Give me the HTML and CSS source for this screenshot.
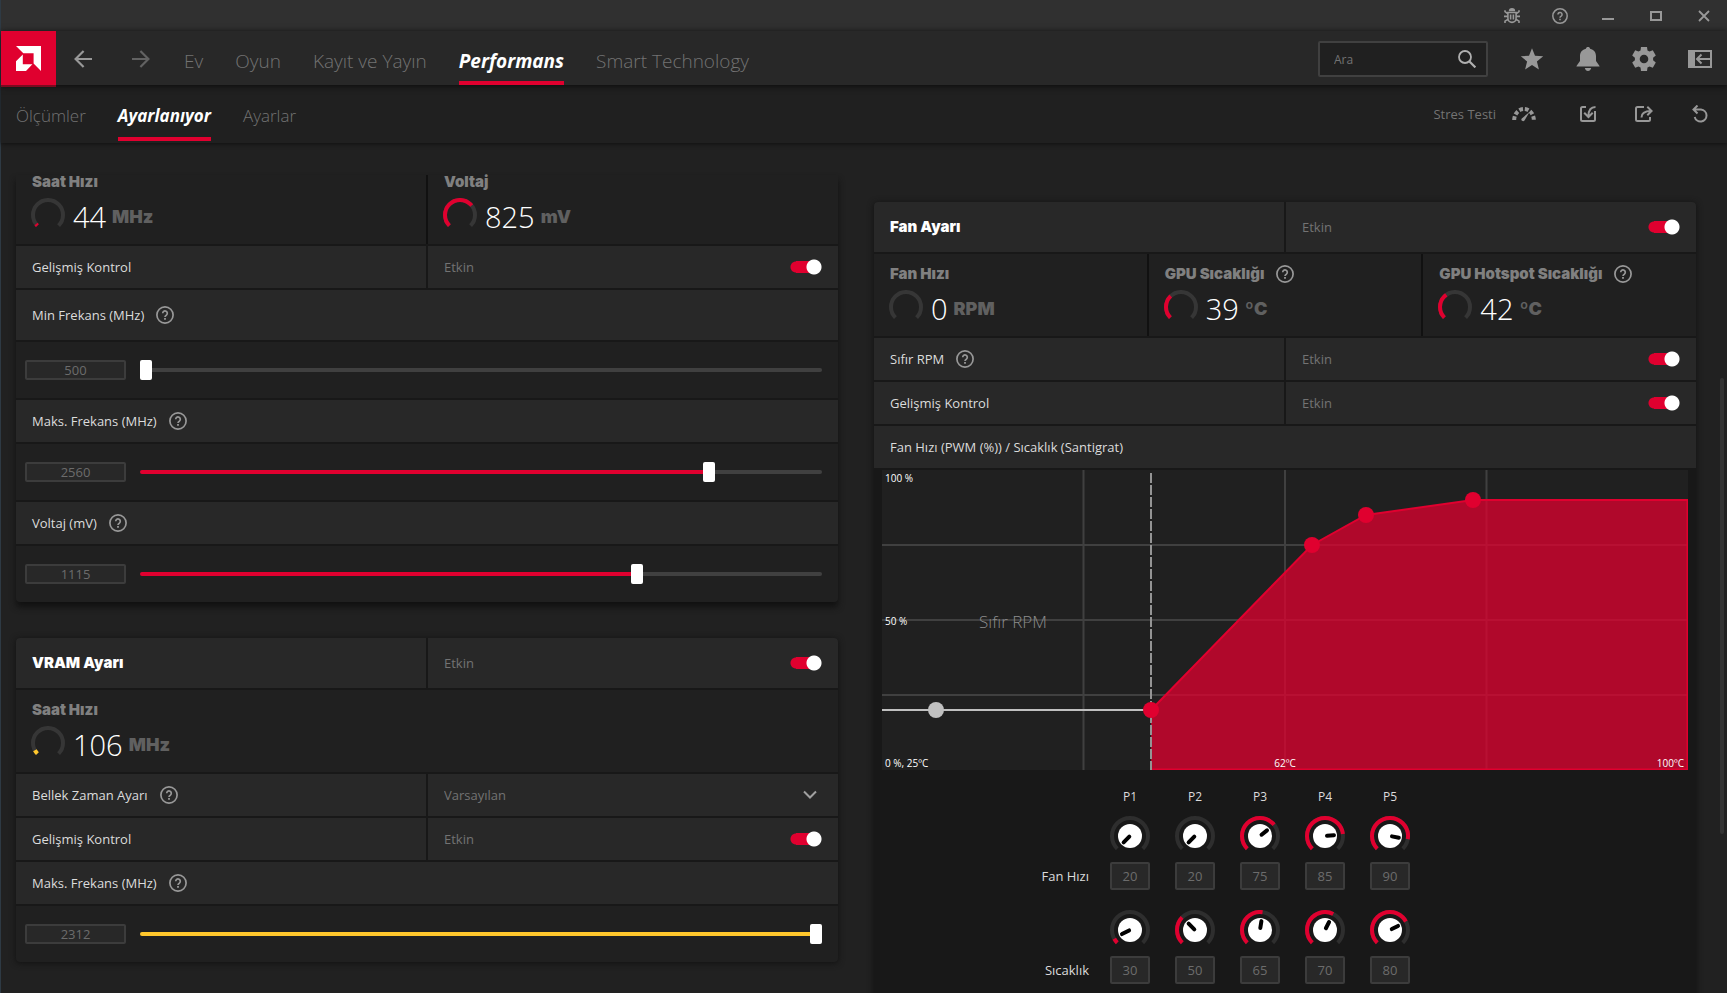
FILE: index.html
```html
<!DOCTYPE html>
<html lang="tr">
<head>
<meta charset="utf-8">
<meta name="viewport" content="width=device-width, initial-scale=1">
<title>Performans - Ayarlanıyor</title>
<link rel="stylesheet" href="styles.css">
</head>
<body>
<svg class="sprite" aria-hidden="true">
  <symbol id="help" viewBox="0 0 18 18">
    <circle cx="9" cy="9" r="8.1" fill="none" stroke="currentColor" stroke-width="1.7"/>
    <path d="M6.7 7.3a2.3 2.3 0 1 1 3.6 1.9Q9 10 9 11" fill="none" stroke="currentColor" stroke-width="1.7"/>
    <path d="M8.1 12h1.8v1.8H8.1z" fill="currentColor"/>
  </symbol>
  <symbol id="arc" viewBox="0 0 34 34">
    <path d="M6.4 27.6A15 15 0 1 1 27.6 27.6" fill="none" stroke="currentColor" stroke-width="4" pathLength="100"/>
  </symbol>
  <symbol id="dial" viewBox="0 0 40 40">
    <path d="M7.27 32.73A18 18 0 1 1 32.73 32.73" fill="none" stroke="#2e2e2e" stroke-width="4"/>
    <circle cx="20" cy="20" r="12" fill="#fff"/>
  </symbol>
</svg>

<div class="window">
  <div class="titlebar">
    <button class="icon-btn" aria-label="Hata bildir"><svg width="18" height="18" viewBox="0 0 18 18" fill="none" stroke="currentColor" stroke-width="1.6"><path d="M5.8 4.2a3.2 3.2 0 0 1 6.4 0z" fill="currentColor" stroke="none"/><path d="M4.9 5.5h8.2v5.8a4.1 4.1 0 0 1-8.2 0zM7.6 7.5v5M10.4 7.5v5M2 3.2v1.4l2.6 2M16 3.2v1.4l-2.6 2M1 9.4h4M13 9.4h4M2 16v-1.8l2.8-1.8M16 16v-1.8l-2.8-1.8"/></svg></button>
    <button class="icon-btn" aria-label="Yardım"><svg width="16" height="16"><use href="#help"/></svg></button>
    <button class="icon-btn" aria-label="Küçült"><svg width="12" height="12" viewBox="0 0 12 12"><path d="M0 8h12v2H0z" fill="currentColor"/></svg></button>
    <button class="icon-btn" aria-label="Ekranı kapla"><svg width="12" height="12" viewBox="0 0 12 12"><path d="M1 2h10v8H1z" fill="none" stroke="currentColor" stroke-width="2"/></svg></button>
    <button class="icon-btn" aria-label="Kapat"><svg width="12" height="12" viewBox="0 0 12 12"><path d="M1 1l10 10M11 1L1 11" stroke="currentColor" stroke-width="1.8"/></svg></button>
  </div>

  <header class="navbar">
    <a class="logo" href="#" aria-label="AMD"><svg width="25" height="25" viewBox="0 0 25 25" fill="#fff"><path d="M0 0h25v25l-7.4-7.6V7.3H7.3z"/><path d="M6.8 8.6v9.6h9.6L10 25H0V15.2z"/></svg></a>
    <div class="history">
      <button class="icon-btn back" aria-label="Geri"><svg width="18" height="18" viewBox="0 0 18 18" fill="none" stroke="currentColor" stroke-width="2.2"><path d="M18 9H2M9.6 1L1.6 9l8 8"/></svg></button>
      <button class="icon-btn forward" aria-label="İleri"><svg width="18" height="18" viewBox="0 0 18 18" fill="none" stroke="currentColor" stroke-width="2.2"><path d="M0 9h16M8.4 1l8 8-8 8"/></svg></button>
    </div>
    <nav class="tabs">
      <a class="tab" href="#">Ev</a>
      <a class="tab" href="#">Oyun</a>
      <a class="tab" href="#">Kayıt ve Yayın</a>
      <a class="tab active" href="#">Performans</a>
      <a class="tab" href="#">Smart Technology</a>
    </nav>
    <div class="actions">
      <label class="search">
        <input type="search" placeholder="Ara" aria-label="Ara">
        <svg width="18" height="18" viewBox="0 0 18 18" fill="none" stroke="currentColor" stroke-width="1.8"><circle cx="7" cy="7" r="6"/><path d="M11.2 11.2l6.2 6.2" stroke-width="2.2"/></svg>
      </label>
      <button class="icon-btn" aria-label="Sık kullanılanlar"><svg width="24" height="24" viewBox="0 0 24 24" fill="currentColor"><path d="M12 1.2l3 7.6 8.2.5-6.3 5.2 2 8-6.9-4.4-6.9 4.4 2-8L.8 9.3 9 8.8z"/></svg></button>
      <button class="icon-btn" aria-label="Bildirimler"><svg width="24" height="24" viewBox="0 0 24 24" fill="currentColor"><path d="M12 0c1.200 0 1.900.7 2.100 1.700C17.800 2.600 20 5.300 20 9v5l3.500 5v.5H.5V19L4 14V9c0-3.700 2.200-6.400 5.900-7.300C10.100.7 10.800 0 12 0zM8.800 21h6.400q-.8 3-3.200 3t-3.200-3z"/></svg></button>
      <button class="icon-btn" aria-label="Ayarlar"><svg width="24" height="24" viewBox="0 0 24 24" fill="currentColor" fill-rule="evenodd"><path d="M9 0h6l.5 3.400 2 1.200L20.800 3.300l3 5.200-2.700 2.200v2.600l2.700 2.200-3 5.200-3.300-1.300-2 1.200L15 24H9l-.5-3.400-2-1.200-3.300 1.300-3-5.200 2.700-2.200v-2.600L.2 8.500l3-5.200 3.300 1.300 2-1.200zM12 7.700a4.300 4.300 0 1 0 0 8.600 4.300 4.300 0 0 0 0-8.600z"/></svg></button>
      <button class="icon-btn" aria-label="Kenar çubuğu"><svg width="24" height="18" viewBox="0 0 24 18" fill="none" stroke="currentColor" stroke-width="2"><path d="M1 1h22v16H1z"/><path d="M0 0h7v18H0z" fill="currentColor" stroke="none"/><path d="M24 9H10M13.500 4.500L9 9l4.500 4.500"/></svg></button>
    </div>
  </header>

  <div class="subbar">
    <nav class="tabs sub">
      <a class="tab" href="#">Ölçümler</a>
      <a class="tab active" href="#">Ayarlanıyor</a>
      <a class="tab" href="#">Ayarlar</a>
    </nav>
    <div class="actions">
      <button class="stress">Stres Testi
        <svg width="24" height="16" viewBox="0 0 24 16" fill="none" stroke="currentColor"><path d="M2.200 14A9.800 11 0 0 1 21.800 14" stroke-width="4" stroke-dasharray="3.800 1.900"/><path d="M9.800 12.400L17.500 6l-5 8.600a1.600 1.600 0 1 1-2.700-2.200z" fill="currentColor" stroke="none"/></svg>
      </button>
      <button class="icon-btn" aria-label="İçe aktar"><svg width="16" height="16" viewBox="0 0 16 16" fill="none" stroke="currentColor" stroke-width="2"><path d="M6 1H2.500Q1 1 1 2.500v11Q1 15 2.500 15h11q1.500 0 1.500-1.500V5"/><path d="M15.500 1Q8.500 1 8.500 10M4.200 6.800l4.300 4.200 4.200-4.200"/></svg></button>
      <button class="icon-btn" aria-label="Dışa aktar"><svg width="18" height="16" viewBox="0 0 18 16" fill="none" stroke="currentColor" stroke-width="2"><path d="M9 1H2.500Q1 1 1 2.500v11Q1 15 2.500 15h11q1.500 0 1.500-1.500V11"/><path d="M6.500 11.500Q6.500 5 16 5M12.300.8L16.600 5l-4.300 4.200"/></svg></button>
      <button class="icon-btn" aria-label="Sıfırla"><svg width="16" height="18" viewBox="0 0 16 18" fill="none" stroke="currentColor" stroke-width="2"><path d="M1.500 4.500H9a6 6 0 1 1-6.300 7.500M5.500.5l-4 4 4 4"/></svg></button>
    </div>
  </div>

  <main class="content">
    <div class="column">
      <section class="card clipped">
        <div class="row stats">
          <div class="stat"><h3>Saat Hızı</h3><div class="reading"><svg class="gauge" width="34" height="34"><use href="#arc" class="rest"/><use href="#arc" class="red" stroke-dasharray="3 200"/></svg><span class="num">44</span><span class="unit">MHz</span></div></div>
          <div class="stat"><h3>Voltaj</h3><div class="reading"><svg class="gauge" width="34" height="34"><use href="#arc" class="rest"/><use href="#arc" class="red" stroke-dasharray="69 200"/></svg><span class="num">825</span><span class="unit">mV</span></div></div>
        </div>
        <div class="row"><label class="cell" for="gpu-adv">Gelişmiş Kontrol</label><div class="cell dim">Etkin<input class="toggle" id="gpu-adv" type="checkbox" checked></div></div>
        <div class="row"><div class="cell tall"><label for="min-freq">Min Frekans (MHz)</label><svg class="help"><use href="#help"/></svg></div></div>
        <div class="slider"><input class="value" type="text" value="500" aria-label="Min Frekans değeri"><input class="range" id="min-freq" type="range" max="1000" value="0" style="--fill:0%"></div>
        <div class="row"><div class="cell"><label for="max-freq">Maks. Frekans (MHz)</label><svg class="help"><use href="#help"/></svg></div></div>
        <div class="slider"><input class="value" type="text" value="2560" aria-label="Maks. Frekans değeri"><input class="range" id="max-freq" type="range" max="1000" value="841" style="--fill:84%"></div>
        <div class="row"><div class="cell"><label for="volt">Voltaj (mV)</label><svg class="help"><use href="#help"/></svg></div></div>
        <div class="slider"><input class="value" type="text" value="1115" aria-label="Voltaj değeri"><input class="range" id="volt" type="range" max="1000" value="733" style="--fill:73%"></div>
      </section>

      <section class="card">
        <div class="row"><label class="cell tall title" for="vram">VRAM Ayarı</label><div class="cell tall dim">Etkin<input class="toggle" id="vram" type="checkbox" checked></div></div>
        <div class="row stats">
          <div class="stat"><h3>Saat Hızı</h3><div class="reading"><svg class="gauge" width="34" height="34"><use href="#arc" class="rest"/><use href="#arc" class="yellow" stroke-dasharray="6 200"/></svg><span class="num">106</span><span class="unit">MHz</span></div></div>
        </div>
        <div class="row"><div class="cell"><label for="timing">Bellek Zaman Ayarı</label><svg class="help"><use href="#help"/></svg></div><div class="cell dim picker"><select id="timing"><option>Varsayılan</option></select><svg width="14" height="10" viewBox="0 0 14 10"><path d="M1 1.500l6 6 6-6" fill="none" stroke="#a0a0a0" stroke-width="2"/></svg></div></div>
        <div class="row"><label class="cell" for="vram-adv">Gelişmiş Kontrol</label><div class="cell dim">Etkin<input class="toggle" id="vram-adv" type="checkbox" checked></div></div>
        <div class="row"><div class="cell"><label for="vram-freq">Maks. Frekans (MHz)</label><svg class="help"><use href="#help"/></svg></div></div>
        <div class="slider"><input class="value" type="text" value="2312" aria-label="VRAM Maks. Frekans değeri"><input class="range amber" id="vram-freq" type="range" max="1000" value="1000" style="--fill:100%"></div>
      </section>
    </div>

    <div class="column fan-column">
      <section class="card fan">
        <div class="row"><label class="cell tall title" for="fan">Fan Ayarı</label><div class="cell tall dim">Etkin<input class="toggle" id="fan" type="checkbox" checked></div></div>
        <div class="row stats">
          <div class="stat"><h3>Fan Hızı</h3><div class="reading"><svg class="gauge" width="34" height="34"><use href="#arc" class="rest"/></svg><span class="num">0</span><span class="unit">RPM</span></div></div>
          <div class="stat"><h3>GPU Sıcaklığı<svg class="help"><use href="#help"/></svg></h3><div class="reading"><svg class="gauge" width="34" height="34"><use href="#arc" class="rest"/><use href="#arc" class="red" stroke-dasharray="34 200"/></svg><span class="num">39</span><span class="unit">ºC</span></div></div>
          <div class="stat"><h3>GPU Hotspot Sıcaklığı<svg class="help"><use href="#help"/></svg></h3><div class="reading"><svg class="gauge" width="34" height="34"><use href="#arc" class="rest"/><use href="#arc" class="red" stroke-dasharray="37 200"/></svg><span class="num">42</span><span class="unit">ºC</span></div></div>
        </div>
        <div class="row"><div class="cell"><label for="zero">Sıfır RPM</label><svg class="help"><use href="#help"/></svg></div><div class="cell dim">Etkin<input class="toggle" id="zero" type="checkbox" checked></div></div>
        <div class="row"><label class="cell" for="fan-adv">Gelişmiş Kontrol</label><div class="cell dim">Etkin<input class="toggle" id="fan-adv" type="checkbox" checked></div></div>
        <div class="row"><div class="cell">Fan Hızı (PWM (%)) / Sıcaklık (Santigrat)</div></div>
        <svg class="chart" viewBox="0 0 806 300" role="img" aria-label="Fan eğrisi">
          <path d="M0 0h806v300H0z" fill="#202020"/>
          <path d="M201.500 0v300M403 0v300M604.500 0v300M0 75h806M0 150h806M0 225h806" stroke="#404040" stroke-width="2"/>
          <path d="M0 240h269" stroke="#c0c0c0" stroke-width="2"/>
          <path d="M269 300V240L430 75l54-30 107-15h215v270z" fill="#e0002f" fill-opacity=".75"/>
          <path d="M269 240L430 75l54-30 107-15h215M805.500 30v269.500H269" fill="none" stroke="#e0002f" stroke-width="2"/>
          <path d="M269 3v297" stroke="#949494" stroke-width="2" stroke-dasharray="10 2"/>
          <circle cx="54" cy="240" r="8" fill="#c0c0c0"/>
          <g fill="#e0002f"><circle cx="269" cy="240" r="8"/><circle cx="430" cy="75" r="8"/><circle cx="484" cy="45" r="8"/><circle cx="591" cy="30" r="8"/></g>
          <text class="zone" x="131" y="158" text-anchor="middle">Sıfır RPM</text>
          <g class="axis"><text x="3" y="12">100 %</text><text x="3" y="155">50 %</text><text x="3" y="297">0 %, 25ºC</text><text x="403" y="297" text-anchor="middle">62ºC</text><text x="802" y="297" text-anchor="end">100ºC</text></g>
        </svg>
        <div class="points">
          <div class="point-row heads"><span class="point-label"></span><span>P1</span><span>P2</span><span>P3</span><span>P4</span><span>P5</span></div>
          <div class="point-row">
            <span class="point-label">Fan Hızı</span>
            <div class="knob"><svg viewBox="0 0 40 40"><use href="#dial"/><path class="needle" d="M20 19v-8" transform="rotate(-135 20 20)"/></svg><input type="text" value="20" aria-label="P1 fan hızı"></div>
            <div class="knob"><svg viewBox="0 0 40 40"><use href="#dial"/><path class="needle" d="M20 19v-8" transform="rotate(-135 20 20)"/></svg><input type="text" value="20" aria-label="P2 fan hızı"></div>
            <div class="knob"><svg viewBox="0 0 40 40"><use href="#dial"/><path class="level" pathLength="100" stroke-dasharray="69 200" d="M7.270 32.730A18 18 0 1 1 32.730 32.730"/><path class="needle" d="M20 18v-7" transform="rotate(51 20 20)"/></svg><input type="text" value="75" aria-label="P3 fan hızı"></div>
            <div class="knob"><svg viewBox="0 0 40 40"><use href="#dial"/><path class="level" pathLength="100" stroke-dasharray="81 200" d="M7.270 32.730A18 18 0 1 1 32.730 32.730"/><path class="needle" d="M20 18v-7" transform="rotate(85 20 20)"/></svg><input type="text" value="85" aria-label="P4 fan hızı"></div>
            <div class="knob"><svg viewBox="0 0 40 40"><use href="#dial"/><path class="level" pathLength="100" stroke-dasharray="87 200" d="M7.270 32.730A18 18 0 1 1 32.730 32.730"/><path class="needle" d="M20 18v-7" transform="rotate(101 20 20)"/></svg><input type="text" value="90" aria-label="P5 fan hızı"></div>
          </div>
          <div class="point-row">
            <span class="point-label">Sıcaklık</span>
            <div class="knob"><svg viewBox="0 0 40 40"><use href="#dial"/><path class="level" pathLength="100" stroke-dasharray="6 200" d="M7.270 32.730A18 18 0 1 1 32.730 32.730"/><path class="needle" d="M20 19v-8" transform="rotate(-117 20 20)"/></svg><input type="text" value="30" aria-label="P1 sıcaklık"></div>
            <div class="knob"><svg viewBox="0 0 40 40"><use href="#dial"/><path class="level" pathLength="100" stroke-dasharray="33 200" d="M7.270 32.730A18 18 0 1 1 32.730 32.730"/><path class="needle" d="M20 19v-8" transform="rotate(-45 20 20)"/></svg><input type="text" value="50" aria-label="P2 sıcaklık"></div>
            <div class="knob"><svg viewBox="0 0 40 40"><use href="#dial"/><path class="level" pathLength="100" stroke-dasharray="53 200" d="M7.270 32.730A18 18 0 1 1 32.730 32.730"/><path class="needle" d="M20 18v-7" transform="rotate(9 20 20)"/></svg><input type="text" value="65" aria-label="P3 sıcaklık"></div>
            <div class="knob"><svg viewBox="0 0 40 40"><use href="#dial"/><path class="level" pathLength="100" stroke-dasharray="60 200" d="M7.270 32.730A18 18 0 1 1 32.730 32.730"/><path class="needle" d="M20 18v-7" transform="rotate(27 20 20)"/></svg><input type="text" value="70" aria-label="P4 sıcaklık"></div>
            <div class="knob"><svg viewBox="0 0 40 40"><use href="#dial"/><path class="level" pathLength="100" stroke-dasharray="73 200" d="M7.270 32.730A18 18 0 1 1 32.730 32.730"/><path class="needle" d="M20 18v-7" transform="rotate(63 20 20)"/></svg><input type="text" value="80" aria-label="P5 sıcaklık"></div>
          </div>
        </div>
      </section>
    </div>
    <div class="scrollbar"></div>
  </main>
</div>
</body>
</html>
```
FILE: styles.css
```css
:root {
  --red: #e0002f;
  --amber: #ffc72c;
  --row: #282828;
  --panel: #202020;
  --line: #181818;
  --edge: #404040;
  --dim: #737373;
  --icon: #989898;
}

* { box-sizing: border-box; }

body {
  margin: 0;
  height: 100vh;
  overflow: hidden;
  background: #212121;
  color: #dcdcdc;
  font-family: "Open Sans", "Noto Sans", sans-serif;
  font-size: 13px;
  line-height: 20px;
}

button, input, select { font: inherit; color: inherit; }
button { padding: 0; border: 0; background: none; }
a { color: inherit; text-decoration: none; }
svg { display: block; flex: none; }
.sprite { display: none; }

.window {
  display: flex;
  flex-direction: column;
  height: 100%;
  border-left: 1px solid #2e3a44;
}

.icon-btn {
  display: grid;
  place-items: center;
  width: 24px;
  height: 24px;
  color: var(--icon);
}

.titlebar {
  display: flex;
  align-items: center;
  justify-content: flex-end;
  gap: 24px;
  height: 31px;
  padding-right: 11px;
  background: #303030;
}

.navbar {
  position: relative;
  z-index: 2;
  display: flex;
  height: 54px;
  padding-right: 15px;
  background: var(--row);
  box-shadow: 0 1px 6px #0a0a0a;
}
.navbar .actions { padding-top: 2px; }

.logo {
  display: grid;
  place-items: center;
  width: 55px;
  background: var(--red);
  box-shadow: 0 2px 0 #7c0a20;
}

.history {
  display: flex;
  align-items: center;
  gap: 34px;
  padding: 2px 31px 0 15px;
}
.forward { color: #626262; }

.tabs {
  display: flex;
  gap: 32px;
  color: var(--dim);
  font-size: 19px;
  font-weight: 300;
}
.tab {
  display: flex;
  align-items: center;
  padding-top: 9px;
  border-bottom: 4px solid transparent;
}
.tab.active {
  border-color: var(--red);
  color: #fff;
  font-style: italic;
  font-weight: 700;
}

.actions {
  display: flex;
  align-items: center;
  gap: 32px;
  margin-left: auto;
}

.search {
  display: flex;
  align-items: center;
  width: 170px;
  height: 36px;
  padding: 0 10px 0 14px;
  border: 2px solid var(--edge);
  border-radius: 2px;
  background: var(--panel);
  color: #b0b0b0;
}
.search input {
  flex: 1;
  min-width: 0;
  padding: 2px 0 0;
  border: 0;
  outline: 0;
  background: none;
  font-size: 12px;
}
.search input::placeholder { color: var(--dim); }

.subbar {
  position: relative;
  z-index: 1;
  display: flex;
  height: 58px;
  padding: 0 15px;
  background: var(--panel);
  box-shadow: 0 1px 4px #101010;
}
.sub { padding-bottom: 2px; font-size: 17px; }
.stress {
  display: flex;
  align-items: center;
  gap: 16px;
  margin-right: 8px;
  color: var(--dim);
}
.stress svg { color: var(--icon); }

.content {
  flex: 1;
  display: grid;
  grid-template-columns: calc(50% - 32px) 1fr auto;
  min-height: 0;
  margin-top: 24px;
  padding: 8px 3px 0 15px;
  overflow: hidden;
}
.column {
  display: flex;
  flex-direction: column;
  gap: 36px;
}
.fan-column { margin-left: 36px; padding-top: 27px; }
.scrollbar {
  width: 4px;
  height: 456px;
  margin: 203px 0 0 24px;
  border-radius: 2px;
  background: #333;
}

.card {
  display: flex;
  flex-direction: column;
  gap: 2px;
  border-radius: 4px;
  background: var(--line);
  box-shadow: 0 1px 6px #111;
}
.card > :first-child > :first-child { border-top-left-radius: 4px; }
.card > :first-child > :last-child { border-top-right-radius: 4px; }
.clipped { border-radius: 0 0 4px 4px; box-shadow: 0 5px 6px #111; }
.clipped > :first-child > * { border-radius: 0 !important; }

.row {
  display: grid;
  grid-auto-flow: column;
  grid-auto-columns: 1fr;
  gap: 2px;
}
.stats { background: #111; }

.cell {
  display: flex;
  align-items: center;
  gap: 12px;
  height: 42px;
  padding: 0 16px;
  background: var(--row);
}
.tall { height: 50px; }
.dim { justify-content: space-between; color: var(--dim); }
.title {
  color: #fff;
  font: 900 15px/20px Inter, "Liberation Sans", sans-serif;
}
.help { width: 18px; height: 18px; color: var(--icon); }

.toggle {
  appearance: none;
  width: 32px;
  height: 16px;
  margin: 0;
  background:
    radial-gradient(circle at 24px 8px, #fff 7px, transparent 8px),
    radial-gradient(circle at 6px 8px, var(--red) 5px, transparent 6px),
    linear-gradient(var(--red), var(--red)) 6px 2px / 16px 12px no-repeat;
}

.stat {
  height: 82px;
  padding: 10px 16px 0;
  background: var(--panel);
}
.stat h3 {
  display: flex;
  align-items: center;
  gap: 12px;
  margin: 0 0 6px;
  color: #808080;
  font: 900 15px/20px Inter, "Liberation Sans", sans-serif;
}
.clipped .stat { height: 69px; padding-top: 0; }
.clipped .stat h3 { margin-top: -3px; }
.reading { display: flex; align-items: center; height: 34px; }
.gauge { margin-left: -1px; }
.rest { color: #363636; }
.red { color: var(--red); }
.yellow { color: var(--amber); }
.num {
  margin: 4px 6px 0 8px;
  color: #fff;
  font-size: 29px;
  font-weight: 300;
  line-height: 34px;
}
.unit {
  padding-top: 4px;
  color: #606060;
  font: 900 18px/24px Inter, "Liberation Sans", sans-serif;
}

.slider {
  display: flex;
  align-items: center;
  gap: 14px;
  height: 56px;
  padding: 0 16px 0 9px;
  background: var(--panel);
}
.slider:last-child { border-radius: 0 0 4px 4px; }
.value, .knob input {
  width: 101px;
  height: 20px;
  padding: 0;
  border: 2px solid #3c3c3c;
  border-radius: 2px;
  background: var(--row);
  color: #6c6c6c;
  text-align: center;
}
.range {
  appearance: none;
  flex: 1;
  min-width: 0;
  height: 20px;
  margin: 0;
  background: none;
}
.range::-webkit-slider-runnable-track {
  height: 4px;
  border-radius: 2px;
  background: linear-gradient(to right, var(--red) var(--fill), var(--edge) var(--fill));
}
.amber::-webkit-slider-runnable-track { background: var(--amber); }
.range::-webkit-slider-thumb {
  appearance: none;
  width: 12px;
  height: 20px;
  margin-top: -8px;
  border-radius: 2px;
  background: #fff;
}

.picker { padding-right: 21px; }
.picker select {
  appearance: none;
  flex: 1;
  padding: 0;
  border: 0;
  background: none;
}

.fan { flex: 1 0 auto; }
.chart { width: calc(100% - 16px); height: auto; margin: 0 8px; }
.zone { fill: #8c8c8c; font-size: 17px; font-weight: 300; }
.axis { fill: #fff; font-size: 10px; }

.points { padding: 15px 0 9px; }
.point-row { display: flex; gap: 25px; margin-bottom: 20px; }
.point-label {
  width: 215px;
  margin: 50px -4px 0 0;
  text-align: right;
}
.heads { margin-bottom: 9px; font-size: 12px; text-align: center; }
.heads span { width: 40px; }
.heads .point-label { width: 215px; margin-top: 0; }
.knob { display: grid; gap: 6px; width: 40px; }
.knob svg { width: 40px; height: 40px; }
.knob input { width: 40px; height: 28px; }
.level { fill: none; stroke: var(--red); stroke-width: 4; }
.needle { stroke: #000; stroke-width: 4; stroke-linecap: round; }
```
